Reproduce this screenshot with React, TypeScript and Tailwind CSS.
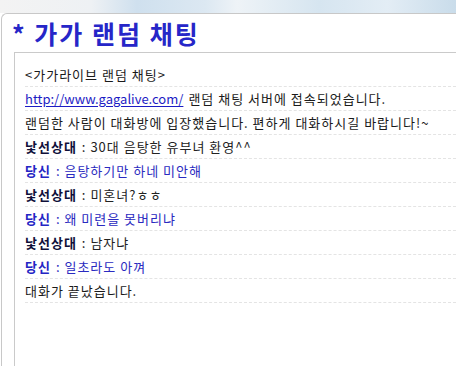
type Line = { who?: 'them' | 'me'; text: string; link?: string }

const LINES: Line[] = [
  { text: '<가가라이브 랜덤 채팅>' },
  { link: 'http://www.gagalive.com/', text: '랜덤 채팅 서버에 접속되었습니다.' },
  { text: '랜덤한 사람이 대화방에 입장했습니다. 편하게 대화하시길 바랍니다!~' },
  { who: 'them', text: '30대 음탕한 유부녀 환영^^' },
  { who: 'me', text: '음탕하기만 하네 미안해' },
  { who: 'them', text: '미혼녀?ㅎㅎ' },
  { who: 'me', text: '왜 미련을 못버리냐' },
  { who: 'them', text: '남자냐' },
  { who: 'me', text: '일초라도 아껴' },
  { text: '대화가 끝났습니다.' },
]

function ChatLine({ line }: { line: Line }): JSX.Element {
  return (
    <div className="h-6 flex items-center gap-[5px] border-b border-dashed border-[#e4e4e4] whitespace-nowrap">
      {line.link && (
        <>
          <a href={line.link} className="text-[#1c1cc4] underline underline-offset-2 tracking-normal">
            {line.link}
          </a>
          <span className="text-[#1a1a1a]">{line.text}</span>
        </>
      )}
      {line.who === 'them' && (
        <>
          <span className="font-bold text-[#10103a]">낯선상대</span>
          <span className="text-[#222]">:&nbsp;{line.text}</span>
        </>
      )}
      {line.who === 'me' && (
        <>
          <span className="font-bold text-[#2424c4]">당신</span>
          <span className="text-[#2a2ac0]">:&nbsp;{line.text}</span>
        </>
      )}
      {!line.who && !line.link && <span className="text-[#1a1a1a]">{line.text}</span>}
    </div>
  )
}

export default function App(): JSX.Element {
  return (
    <div
      className="w-[456px] h-[366px] overflow-hidden bg-white"
      style={{ fontFamily: '"Noto Sans CJK KR", "Noto Sans", sans-serif' }}
    >
      {/* top header strip */}
      <div className="h-[13px] bg-[linear-gradient(90deg,#f3f3f3_0%,#eef1f4_20%,#cfe0ee_30%,#dce8f2_45%,#eef3f7_52%,#d6e5f0_70%,#e3edf5_85%,#c9dcea_100%)]" />

      <div className="ml-[1px] h-[353px] border-l border-t border-[#c8c8c8] rounded-tl-[6px] bg-white">
        <div className="h-[38px] pl-[10px] flex items-center">
          <h1 className="text-[25px] leading-none font-bold text-[#2626c8] tracking-[2px]">
            * 가가 랜덤 채팅
          </h1>
        </div>
        <div className="ml-[12px] h-full border-l border-t border-[#cacaca] pl-[10px] pt-[10px] text-[13px] tracking-[1px]">
          {LINES.map((l, i) => (
            <ChatLine key={i} line={l} />
          ))}
        </div>
      </div>
    </div>
  )
}
